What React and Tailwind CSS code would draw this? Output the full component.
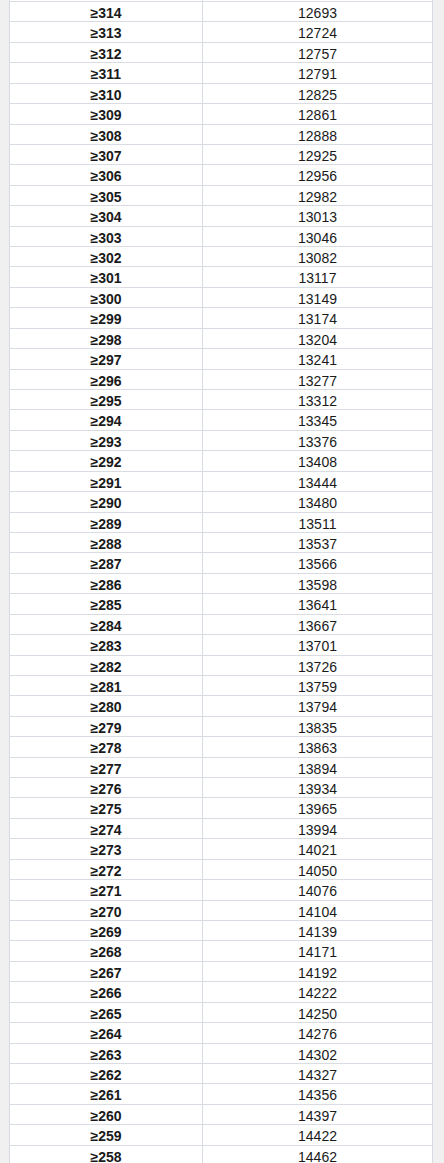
import React from "react";

const rows = [
  [314, 12693], [313, 12724], [312, 12757], [311, 12791], [310, 12825],
  [309, 12861], [308, 12888], [307, 12925], [306, 12956], [305, 12982],
  [304, 13013], [303, 13046], [302, 13082], [301, 13117], [300, 13149],
  [299, 13174], [298, 13204], [297, 13241], [296, 13277], [295, 13312],
  [294, 13345], [293, 13376], [292, 13408], [291, 13444], [290, 13480],
  [289, 13511], [288, 13537], [287, 13566], [286, 13598], [285, 13641],
  [284, 13667], [283, 13701], [282, 13726], [281, 13759], [280, 13794],
  [279, 13835], [278, 13863], [277, 13894], [276, 13934], [275, 13965],
  [274, 13994], [273, 14021], [272, 14050], [271, 14076], [270, 14104],
  [269, 14139], [268, 14171], [267, 14192], [266, 14222], [265, 14250],
  [264, 14276], [263, 14302], [262, 14327], [261, 14356], [260, 14397],
  [259, 14422], [258, 14462],
];

export default function App() {
  return (
    <div className="w-[444px] h-[1163px] overflow-hidden bg-[#f0f0f0] pl-[9px] pr-[11px] font-['Liberation_Sans',Arial,sans-serif] text-[14px] text-[#1a1a1a]">
      <div className="bg-white border-x border-[#d6dae2]">
        {/* sliver of the row above */}
        <div className="h-[1px] grid grid-cols-[193px_1fr]">
          <div className="border-r border-[#d6dae2]" />
          <div />
        </div>
        {rows.map(([score, rank]) => (
          <div
            key={score}
            className="h-[20.43px] grid grid-cols-[193px_1fr] border-t border-[#d9dce3] leading-[20px]"
          >
            <div className="border-r border-[#d6dae2] text-center font-bold pt-[1px]">
              ≥{score}
            </div>
            <div className="text-center pt-[1px]">{rank}</div>
          </div>
        ))}
      </div>
    </div>
  );
}
